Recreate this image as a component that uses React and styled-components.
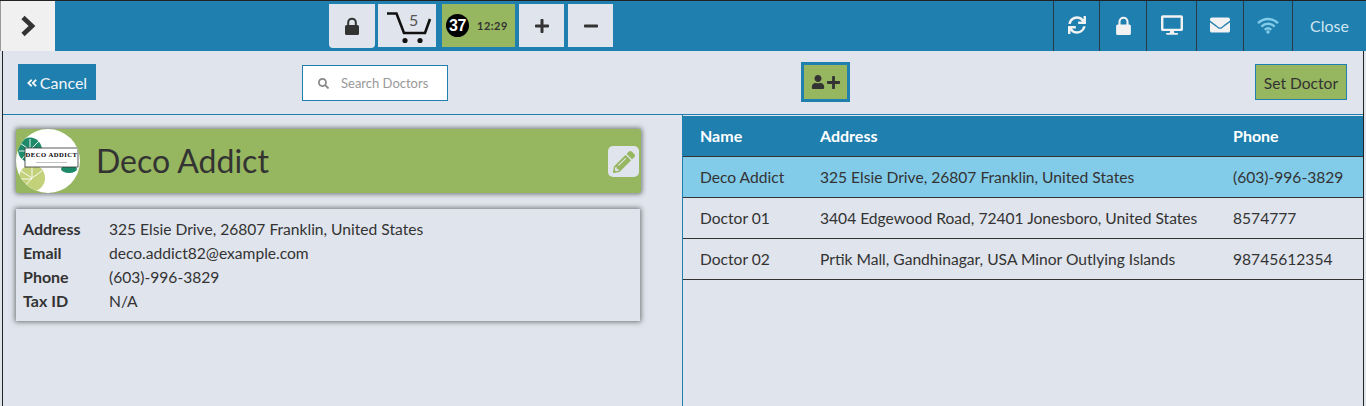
import React from 'react'
import styled, { createGlobalStyle } from 'styled-components'
import {
  FaAngleDoubleLeft,
  FaDesktop,
  FaEnvelope,
  FaMinus,
  FaPencilAlt,
  FaPlus,
  FaSearch,
  FaSync,
  FaUser,
} from 'react-icons/fa'

const blue = '#1f7fae'
const green = '#96b65f'
const paper = '#e0e4ec'
const ink = '#333333'

const GlobalStyle = createGlobalStyle`
  html, body {
    margin: 0;
    padding: 0;
    background: ${paper};
    overflow: hidden;
  }
  * {
    box-sizing: border-box;
  }
`

const Page = styled.div`
  width: 1366px;
  height: 406px;
  display: flex;
  flex-direction: column;
  font-family: Lato, "Open Sans", sans-serif;
  font-size: 15.6px;
  color: ${ink};
  background: ${paper};
`

const TopBar = styled.header`
  height: 51px;
  flex: none;
  display: flex;
  background: ${blue};
  border-top: 1px solid #222;
`

const MenuToggle = styled.div`
  width: 55px;
  margin-right: 274px;
  display: flex;
  align-items: center;
  justify-content: center;
  background: #f0f0f0;
  border-left: 1px solid #999;
`

const Tools = styled.div`
  display: flex;
  gap: 3px;
  padding-top: 3px;
  height: 47px;
  flex: 1;
`

const Tool = styled.div`
  width: ${p => p.$w || 45}px;
  height: ${p => p.$h || 43}px;
  margin-right: ${p => p.$mr || 0}px;
  display: flex;
  align-items: center;
  justify-content: center;
  background: ${paper};
  border-radius: ${p => (p.$round ? '0 0 4px 4px' : '0')};
  font-size: 16px;
  position: relative;
`

const TimerTool = styled.div`
  width: 73px;
  height: 43px;
  margin-right: 1px;
  padding-left: 4px;
  display: flex;
  align-items: center;
  background: ${green};
`

const CartCount = styled.span`
  position: absolute;
  top: 6px;
  left: 31px;
  font-size: 16px;
  line-height: 20px;
  color: #555;
`

const Badge = styled.span`
  width: 23px;
  height: 23px;
  border-radius: 50%;
  background: #000;
  color: #fff;
  font-family: "Liberation Sans", sans-serif;
  font-weight: 700;
  font-size: 16px;
  letter-spacing: -0.5px;
  display: flex;
  align-items: center;
  justify-content: center;
  margin-right: 8px;
`

const Clock = styled.span`
  font-size: 11px;
  font-weight: 700;
  letter-spacing: 0.5px;
  color: #333;
`

const StatusItem = styled.div`
  width: ${p => p.$w}px;
  padding-bottom: 2px;
  display: flex;
  align-items: center;
  justify-content: center;
  border-left: 1px solid #2b3a42;
  color: ${p => p.$color || '#f2f2f2'};
  font-size: ${p => p.$size || 18}px;
`

const Main = styled.main`
  flex: 1;
  min-height: 0;
  margin: 0 2px;
  display: flex;
  flex-direction: column;
  border-left: 1px solid #222;
  border-right: 1px solid #222;
`

const ActionBar = styled.div`
  height: 64px;
  flex: none;
  padding: 13px 16px 0 15px;
  display: grid;
  grid-template-columns: 284px 499px 1fr auto;
  align-items: start;
  border-bottom: 1px solid ${blue};
`

const CancelButton = styled.button`
  width: 78px;
  height: 36px;
  padding: 0 1px 0 0;
  border: 0;
  background: ${blue};
  color: #f4f6f8;
  font: inherit;
  font-size: 16px;
  display: flex;
  align-items: center;
  justify-content: center;
  gap: 2px;
  svg {
    font-size: 12px;
    margin-top: 1px;
  }
`

const Search = styled.div`
  width: 146px;
  height: 36px;
  margin-top: 1px;
  padding-left: 15px;
  display: flex;
  align-items: center;
  gap: 12px;
  background: #fff;
  border: 1px solid ${blue};
  font-size: 13px;
  color: #999;
  svg {
    font-size: 11px;
    color: #888;
  }
`

const AddButton = styled.button`
  justify-self: start;
  margin-top: -2px;
  width: 49px;
  height: 40px;
  padding: 0;
  background: ${green};
  border: 3px solid ${blue};
  color: ${ink};
  display: flex;
  align-items: center;
  justify-content: center;
  gap: 1px;
`

const SetDoctor = styled.button`
  width: 92px;
  height: 36px;
  padding: 1px 0 0;
  background: ${green};
  border: 1px solid ${blue};
  color: ${ink};
  font: inherit;
`

const Content = styled.div`
  flex: 1;
  display: grid;
  grid-template-columns: 680px 1fr;
  min-height: 0;
`

const Detail = styled.section`
  padding: 14px 0 0 13px;
  border-right: 1px solid ${blue};
`

const NameBanner = styled.div`
  width: 625px;
  height: 64px;
  display: flex;
  align-items: center;
  background: ${green};
  border-radius: 2px;
  box-shadow: 0 0 5px 1px rgba(0, 0, 0, 0.5);
  position: relative;
`

const Avatar = styled.div`
  width: 64px;
  height: 64px;
  flex: none;
  margin-right: 16px;
  border-radius: 50%;
  background: #fff;
  overflow: hidden;
  display: flex;
  align-items: center;
  justify-content: center;
`

const BannerTitle = styled.h1`
  margin: 0;
  padding-bottom: 2px;
  font-size: 32px;
  font-weight: 400;
  color: ${ink};
`

const EditButton = styled.div`
  position: absolute;
  top: 17px;
  left: 592px;
  width: 31px;
  height: 31px;
  display: flex;
  align-items: center;
  justify-content: center;
  background: ${paper};
  border-radius: 5px;
  color: ${green};
  font-size: 22px;
`

const InfoCard = styled.div`
  width: 624px;
  margin-top: 16px;
  padding: 8px 7px;
  display: grid;
  grid-template-columns: 86px 1fr;
  grid-auto-rows: 24px;
  align-items: baseline;
  line-height: 24px;
  box-shadow: 0 0 5px 1px rgba(0, 0, 0, 0.5);
`

const InfoLabel = styled.span`
  font-size: 16px;
  font-weight: 700;
`

const DoctorTable = styled.table`
  width: 100%;
  height: max-content;
  margin-top: 1px;
  border-collapse: collapse;
  td {
    height: 41px;
    padding: 0 0 0 17px;
    border-bottom: 1px solid #333;
  }
`

const HeaderCell = styled.th`
  width: ${p => p.$w || 'auto'};
  height: 40px;
  padding: 0 0 0 17px;
  background: ${blue};
  color: #fff;
  font-size: 16px;
  font-weight: 700;
  text-align: left;
  border-bottom: 1px solid #333;
`

const DoctorRow = styled.tr`
  background: ${p => (p.$active ? '#82cbe9' : 'transparent')};
`

const Chevron = () => (
  <svg width="16" height="22" viewBox="0 0 16 22" fill="none" stroke="#333" strokeWidth="4.6">
    <path d="M3 2.5 L12 11 L3 19.5" />
  </svg>
)

const Padlock = ({ width = 14, height = 18 }) => (
  <svg width={width} height={height} viewBox="0 0 14 18">
    <path d="M3.2 9V5.5a3.8 3.8 0 0 1 7.6 0V9" fill="none" stroke="currentColor" strokeWidth="2" />
    <rect x="0" y="8" width="14" height="10" rx="1.5" fill="currentColor" />
  </svg>
)

const Wifi = () => (
  <svg width="22" height="17" viewBox="0 0 22 17" fill="none" stroke="currentColor" strokeWidth="2.4">
    <path d="M1 6.2C6.6 0.6 15.4 0.6 21 6.2" />
    <path d="M4.4 9.6C8.2 5.8 13.8 5.8 17.6 9.6" />
    <path d="M7.8 12.8C9.8 11 12.2 11 14.2 12.8" />
    <circle cx="11" cy="15" r="1.8" fill="currentColor" stroke="none" />
  </svg>
)

const Cart = () => (
  <svg width="58" height="43" viewBox="0 0 58 43" fill="none" stroke="#111" strokeWidth="2.6">
    <path d="M9 9.5H18.5L26 29H47L52 15" />
    <circle cx="27" cy="36.5" r="2.6" fill="#111" stroke="none" />
    <circle cx="42" cy="36.5" r="2.6" fill="#111" stroke="none" />
  </svg>
)

const Logo = () => (
  <svg width="64" height="64" viewBox="0 0 64 64">
    <ellipse cx="14" cy="21" rx="12" ry="12.5" fill="#1f8a6a" />
    <path d="M4 14L14 21M3 22H14M6 30L14 21M14 10V21M23 12L14 21" stroke="#fff" strokeWidth="0.9" />
    <ellipse cx="16" cy="49" rx="13" ry="13.5" fill="#c3d27a" />
    <path d="M5 42L16 49M4 50H16M7 59L16 49M16 37V49M26 42L16 49" stroke="#fff" strokeWidth="0.9" />
    <ellipse cx="53" cy="40" rx="8" ry="4" fill="#1f8a6a" />
    <rect x="9" y="19" width="53" height="19" fill="#fff" stroke="#333" strokeWidth="0.8" />
    <text x="35.5" y="28" textAnchor="middle" fontFamily="Liberation Serif, serif" fontWeight="700" fontSize="6.6" letterSpacing="0.5" fill="#000">
      DECO ADDICT
    </text>
    <rect x="20" y="33" width="31" height="0.7" fill="#aaa" />
  </svg>
)

const info = [
  ['Address', '325 Elsie Drive, 26807 Franklin, United States'],
  ['Email', 'deco.addict82@example.com'],
  ['Phone', '(603)-996-3829'],
  ['Tax ID', 'N/A'],
]

const doctors = [
  ['Deco Addict', '325 Elsie Drive, 26807 Franklin, United States', '(603)-996-3829'],
  ['Doctor 01', '3404 Edgewood Road, 72401 Jonesboro, United States', '8574777'],
  ['Doctor 02', 'Prtik Mall, Gandhinagar, USA Minor Outlying Islands', '98745612354'],
]

const App = () => (
  <Page>
    <GlobalStyle />
    <TopBar>
      <MenuToggle>
        <Chevron />
      </MenuToggle>
      <Tools>
        <Tool $w={46} $h={44} $round>
          <Padlock />
        </Tool>
        <Tool $w={58} $mr={3}>
          <Cart />
          <CartCount>5</CartCount>
        </Tool>
        <TimerTool>
          <Badge>37</Badge>
          <Clock>12:29</Clock>
        </TimerTool>
        <Tool $mr={1}>
          <FaPlus />
        </Tool>
        <Tool>
          <FaMinus />
        </Tool>
      </Tools>
      <StatusItem $w={46}>
        <FaSync />
      </StatusItem>
      <StatusItem $w={47}>
        <Padlock width={15} height={19} />
      </StatusItem>
      <StatusItem $w={50} $size={22}>
        <FaDesktop />
      </StatusItem>
      <StatusItem $w={47} $size={20}>
        <FaEnvelope />
      </StatusItem>
      <StatusItem $w={49} $color="#82cbe9">
        <Wifi />
      </StatusItem>
      <StatusItem $w={74} $size={16} $color="#cfe6f2">
        Close
      </StatusItem>
    </TopBar>
    <Main>
      <ActionBar>
        <CancelButton>
          <FaAngleDoubleLeft />
          Cancel
        </CancelButton>
        <Search>
          <FaSearch />
          Search Doctors
        </Search>
        <AddButton>
          <FaUser size={14} />
          <FaPlus size={15} />
        </AddButton>
        <SetDoctor>Set Doctor</SetDoctor>
      </ActionBar>
      <Content>
        <Detail>
          <NameBanner>
            <Avatar>
              <Logo />
            </Avatar>
            <BannerTitle>Deco Addict</BannerTitle>
            <EditButton>
              <FaPencilAlt />
            </EditButton>
          </NameBanner>
          <InfoCard>
            {info.map(([label, value]) => (
              <React.Fragment key={label}>
                <InfoLabel>{label}</InfoLabel>
                <span>{value}</span>
              </React.Fragment>
            ))}
          </InfoCard>
        </Detail>
        <DoctorTable>
          <thead>
            <tr>
              <HeaderCell $w="120px">Name</HeaderCell>
              <HeaderCell $w="413px">Address</HeaderCell>
              <HeaderCell>Phone</HeaderCell>
            </tr>
          </thead>
          <tbody>
            {doctors.map(([name, address, phone], i) => (
              <DoctorRow key={name} $active={i === 0}>
                <td>{name}</td>
                <td>{address}</td>
                <td>{phone}</td>
              </DoctorRow>
            ))}
          </tbody>
        </DoctorTable>
      </Content>
    </Main>
  </Page>
)

export default App
